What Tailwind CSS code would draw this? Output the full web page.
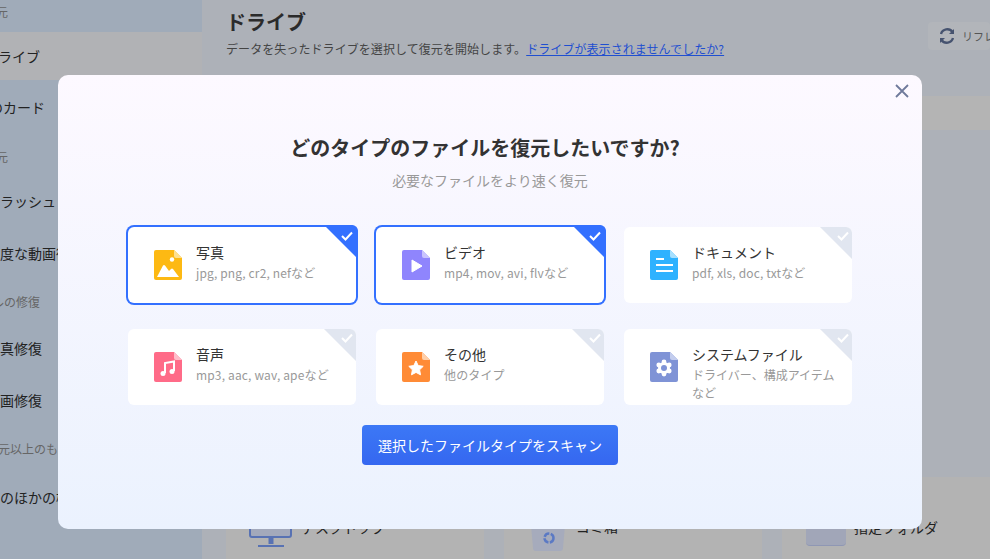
<!DOCTYPE html>
<html lang="ja">
<head>
    <meta charset="UTF-8">
    <title>ファイルタイプ選択</title>
    <script src="https://cdn.jsdelivr.net/npm/@tailwindcss/browser@4"></script>
</head>
<body class="relative w-[990px] h-[559px] overflow-hidden bg-[#adb1b8] [font-family:'Noto_Sans_CJK_JP','Noto_Sans',sans-serif]">
    <!-- app behind the dialog -->
    <div class="flex h-full">
        <aside class="w-[202px] shrink-0 overflow-hidden bg-[#a0abb9] text-sm text-[#222] whitespace-nowrap">
            <div class="h-8 pb-2 flex items-center -ml-[64px] text-xs text-[#666]">ファイル復元</div>
            <div class="h-12 flex items-center bg-[#b1b2b5]"><span class="-ml-[16px]">ドライブ</span></div>
            <div class="h-[54px] flex items-center -ml-[53px]">メモリのカード</div>
            <div class="h-[42px] pt-1 flex items-center -ml-[52px] text-xs text-[#666]">ビデオ復元</div>
            <div class="h-[50px] flex items-center -ml-[14px]">クラッシュしたビデオ</div>
            <div class="h-[54px] flex items-center -ml-[14px]">高度な動画復元</div>
            <div class="h-[44px] flex items-center -ml-[44px] text-xs text-[#666]">ファイルの修復</div>
            <div class="h-12 flex items-center -ml-[14px]">写真修復</div>
            <div class="h-14 flex items-center -ml-[14px]">動画修復</div>
            <div class="h-[42px] flex items-center -ml-[50px] text-xs text-[#666]">ファイル元以上のもの</div>
            <div class="h-[54px] flex items-center -ml-[14px]">そのほかの機能</div>
        </aside>
        <main class="flex-1 min-w-0 flex flex-col">
            <div class="h-24 flex justify-between pl-6 pt-2">
                <div>
                    <h1 class="text-xl font-bold text-[#2b2b2b]">ドライブ</h1>
                    <p class="mt-[5px] text-xs tracking-[0.07px] text-[#444]">データを失ったドライブを選択して復元を開始します。<a href="#" class="text-[#1f4fd0] underline">ドライブが表示されませんでしたか?</a></p>
                </div>
                <div class="mt-3.5 w-[62px] h-7 shrink-0 rounded bg-[#b2b5ba] flex items-center gap-1.5 pl-2.5 text-[11px] text-[#555] whitespace-nowrap overflow-hidden">
                    <svg class="shrink-0" width="18" height="18" viewBox="0 0 18 18" fill="none" stroke="#46536f" stroke-width="2.4"><path d="M3 7a6.5 6.5 0 0 1 11.5-2"/><path d="M15 11a6.5 6.5 0 0 1-11.5 2"/><path d="M16 2v5h-5z" fill="#46536f" stroke="none"/><path d="M2 16v-5h5z" fill="#46536f" stroke="none"/></svg>
                    リフレッシュ
                </div>
            </div>
            <div class="h-[34px] ml-6 bg-[#b4b4b4]"></div>
            <div class="flex-1"></div>
            <div class="h-[82px] ml-6 grid grid-cols-[258px_258px_1fr] gap-5 text-sm text-[#222]">
                <div class="bg-[#b3b3b3] flex items-end gap-2 pl-[23px] pb-3">
                    <svg width="44" height="30" viewBox="0 0 44 30" fill="#a3a9bb" stroke="#5872b3" stroke-width="2"><rect x="1" y="-12" width="41" height="32" rx="2"/><path d="M22 20v7" stroke-width="5"/><path d="M9 29h26" stroke-width="2"/></svg>
                    <span class="mb-[10px]">デスクトップ</span>
                </div>
                <div class="bg-[#b3b3b3] flex items-end gap-[11px] pl-[27px] pb-2">
                    <svg width="34" height="26" viewBox="0 0 34 26"><path d="M0 0h34l-2 23a3 3 0 0 1-3 3H5a3 3 0 0 1-3-3z" fill="#a6abbc"/><circle cx="18" cy="13" r="4.500" fill="none" stroke="#5b79c4" stroke-width="2.500" stroke-dasharray="6 1.500"/></svg>
                    <span class="mb-[15px]">ゴミ箱</span>
                </div>
                <div class="bg-[#b3b3b3] flex items-end gap-2 pl-6 pb-[13px]">
                    <div class="w-10 h-5 rounded-b-sm bg-[#a1a6b8] border-b border-[#8f97b4]"></div>
                    <span class="mb-[9px]">指定フォルダ</span>
                </div>
            </div>
        </main>
    </div>

    <!-- dialog -->
    <div class="absolute left-[58px] top-[75px] w-[864px] h-[454px] rounded-[10px] bg-linear-to-b from-[#fdf9ff] to-[#ebf2fe] flex flex-col items-center">
        <button class="absolute right-[12px] top-[8px] w-4 h-4 text-[#6f7a9b]">
            <svg width="16" height="16" viewBox="0 0 16 16" fill="none" stroke="currentColor" stroke-width="1.8"><path d="M2 2l12 12M14 2L2 14"/></svg>
        </button>
        <h2 class="mt-[58px] pr-[10px] text-xl leading-[30px] font-bold text-[#333]">どのタイプのファイルを復元したいですか?</h2>
        <p class="mt-[7px] text-sm leading-5 text-[#999]">必要なファイルをより速く復元</p>
        <div class="mt-[37px] w-[724px] grid grid-cols-3 gap-x-5 gap-y-[26px]">
            <!-- 写真 -->
            <div class="relative h-[76px] bg-white rounded-md ring-2 ring-[#3370ff] flex pl-[26px] pt-[23px] gap-[14px]">
                <svg class="shrink-0" width="28" height="30" viewBox="0 0 28 30"><path d="M2 0h18l8 8v20a2 2 0 0 1-2 2H2a2 2 0 0 1-2-2V2a2 2 0 0 1 2-2z" fill="#fdb913"/><path d="M20 0l8 8h-6a2 2 0 0 1-2-2z" fill="#fee08f"/><circle cx="18" cy="9.500" r="2.200" fill="#fff"/><path d="M3 27l6-11.500q1-1 2 0L15 21l2-2q1-1 2 0l6 8z" fill="#fff"/></svg>
                <div class="w-[150px] -mt-[8px]">
                    <div class="text-sm leading-5 text-[#333]">写真</div>
                    <div class="mt-[2px] text-xs leading-[18px] tracking-[0.15px] text-[#999]">jpg, png, cr2, nefなど</div>
                </div>
                <div class="absolute -right-[2px] -top-[2px] w-[34px] h-[34px] rounded-tr-md bg-[#3370ff] [clip-path:polygon(0_0,100%_0,100%_100%)]"></div>
                <svg class="absolute right-[3px] top-[4px]" width="12" height="10" viewBox="0 0 12 10" fill="none" stroke="#fff" stroke-width="2"><path d="M1 5l3.500 3.500L11 1.500"/></svg>
            </div>
            <!-- ビデオ -->
            <div class="relative h-[76px] bg-white rounded-md ring-2 ring-[#3370ff] flex pl-[26px] pt-[23px] gap-[14px]">
                <svg class="shrink-0" width="28" height="30" viewBox="0 0 28 30"><path d="M2 0h18l8 8v20a2 2 0 0 1-2 2H2a2 2 0 0 1-2-2V2a2 2 0 0 1 2-2z" fill="#8f85fd"/><path d="M20 0l8 8h-6a2 2 0 0 1-2-2z" fill="#c9c4fe"/><path d="M10 10l10 6-10 6z" fill="#fff" stroke="#fff" stroke-linejoin="round"/></svg>
                <div class="w-[150px] -mt-[8px]">
                    <div class="text-sm leading-5 text-[#333]">ビデオ</div>
                    <div class="mt-[2px] text-xs leading-[18px] tracking-[0.15px] text-[#999]">mp4, mov, avi, flvなど</div>
                </div>
                <div class="absolute -right-[2px] -top-[2px] w-[34px] h-[34px] rounded-tr-md bg-[#3370ff] [clip-path:polygon(0_0,100%_0,100%_100%)]"></div>
                <svg class="absolute right-[3px] top-[4px]" width="12" height="10" viewBox="0 0 12 10" fill="none" stroke="#fff" stroke-width="2"><path d="M1 5l3.500 3.500L11 1.500"/></svg>
            </div>
            <!-- ドキュメント -->
            <div class="relative h-[76px] bg-white rounded-md flex pl-[26px] pt-[23px] gap-[14px]">
                <svg class="shrink-0" width="28" height="30" viewBox="0 0 28 30"><path d="M2 0h18l8 8v20a2 2 0 0 1-2 2H2a2 2 0 0 1-2-2V2a2 2 0 0 1 2-2z" fill="#2eb2ff"/><path d="M20 0l8 8h-6a2 2 0 0 1-2-2z" fill="#a6e0ff"/><path d="M6 9h8M6 15h17M6 21h17" stroke="#fff" stroke-width="2"/></svg>
                <div class="w-[150px] -mt-[8px]">
                    <div class="text-sm leading-5 text-[#333]">ドキュメント</div>
                    <div class="mt-[2px] text-xs leading-[18px] tracking-[0.15px] text-[#999]">pdf, xls, doc, txtなど</div>
                </div>
                <div class="absolute right-0 top-0 w-8 h-8 rounded-tr-md bg-[#e1e6f0] [clip-path:polygon(0_0,100%_0,100%_100%)]"></div>
                <svg class="absolute right-[3px] top-[4px]" width="12" height="10" viewBox="0 0 12 10" fill="none" stroke="#fff" stroke-width="2"><path d="M1 5l3.500 3.500L11 1.500"/></svg>
            </div>
            <!-- 音声 -->
            <div class="relative h-[76px] bg-white rounded-md flex pl-[26px] pt-[23px] gap-[14px]">
                <svg class="shrink-0" width="28" height="30" viewBox="0 0 28 30"><path d="M2 0h18l8 8v20a2 2 0 0 1-2 2H2a2 2 0 0 1-2-2V2a2 2 0 0 1 2-2z" fill="#ff6b88"/><path d="M20 0l8 8h-6a2 2 0 0 1-2-2z" fill="#ffbcc9"/><path d="M11 21V11l9-1.500V19" fill="none" stroke="#fff" stroke-width="2"/><circle cx="9" cy="21.500" r="2.500" fill="#fff"/><circle cx="18" cy="19.500" r="2.500" fill="#fff"/></svg>
                <div class="w-[150px] -mt-[8px]">
                    <div class="text-sm leading-5 text-[#333]">音声</div>
                    <div class="mt-[2px] text-xs leading-[18px] tracking-[0.15px] text-[#999]">mp3, aac, wav, apeなど</div>
                </div>
                <div class="absolute right-0 top-0 w-8 h-8 rounded-tr-md bg-[#e1e6f0] [clip-path:polygon(0_0,100%_0,100%_100%)]"></div>
                <svg class="absolute right-[3px] top-[4px]" width="12" height="10" viewBox="0 0 12 10" fill="none" stroke="#fff" stroke-width="2"><path d="M1 5l3.500 3.500L11 1.500"/></svg>
            </div>
            <!-- その他 -->
            <div class="relative h-[76px] bg-white rounded-md flex pl-[26px] pt-[23px] gap-[14px]">
                <svg class="shrink-0" width="28" height="30" viewBox="0 0 28 30"><path d="M2 0h18l8 8v20a2 2 0 0 1-2 2H2a2 2 0 0 1-2-2V2a2 2 0 0 1 2-2z" fill="#ff8b36"/><path d="M20 0l8 8h-6a2 2 0 0 1-2-2z" fill="#ffcfa9"/><path d="M14 9l2.200 4.600 5 .7-3.600 3.500.9 5L14 20.400l-4.500 2.400.9-5-3.600-3.500 5-.7z" fill="#fff" stroke="#fff" stroke-linejoin="round"/></svg>
                <div class="w-[150px] -mt-[8px]">
                    <div class="text-sm leading-5 text-[#333]">その他</div>
                    <div class="mt-[2px] text-xs leading-[18px] tracking-[0.15px] text-[#999]">他のタイプ</div>
                </div>
                <div class="absolute right-0 top-0 w-8 h-8 rounded-tr-md bg-[#e1e6f0] [clip-path:polygon(0_0,100%_0,100%_100%)]"></div>
                <svg class="absolute right-[3px] top-[4px]" width="12" height="10" viewBox="0 0 12 10" fill="none" stroke="#fff" stroke-width="2"><path d="M1 5l3.500 3.500L11 1.500"/></svg>
            </div>
            <!-- システムファイル -->
            <div class="relative h-[76px] bg-white rounded-md flex pl-[26px] pt-[23px] gap-[14px]">
                <svg class="shrink-0" width="28" height="30" viewBox="0 0 28 30"><path d="M2 0h18l8 8v20a2 2 0 0 1-2 2H2a2 2 0 0 1-2-2V2a2 2 0 0 1 2-2z" fill="#7f93d6"/><path d="M20 0l8 8h-6a2 2 0 0 1-2-2z" fill="#c3cdee"/><g fill="#fff"><circle cx="14" cy="16" r="6"/><circle cx="14" cy="10" r="2.400"/><circle cx="14" cy="22" r="2.400"/><circle cx="8.800" cy="13" r="2.400"/><circle cx="19.200" cy="13" r="2.400"/><circle cx="8.800" cy="19" r="2.400"/><circle cx="19.200" cy="19" r="2.400"/></g><circle cx="14" cy="16" r="3" fill="#7f93d6"/></svg>
                <div class="w-[150px] -mt-[8px]">
                    <div class="text-sm leading-5 text-[#333]">システムファイル</div>
                    <div class="mt-[2px] text-xs leading-[18px] text-[#999]">ドライバー、構成アイテムなど</div>
                </div>
                <div class="absolute right-0 top-0 w-8 h-8 rounded-tr-md bg-[#e1e6f0] [clip-path:polygon(0_0,100%_0,100%_100%)]"></div>
                <svg class="absolute right-[3px] top-[4px]" width="12" height="10" viewBox="0 0 12 10" fill="none" stroke="#fff" stroke-width="2"><path d="M1 5l3.500 3.500L11 1.500"/></svg>
            </div>
        </div>
        <button class="mt-5 w-64 h-10 rounded bg-linear-to-b from-[#3c78f6] to-[#3567f0] text-sm text-white">選択したファイルタイプをスキャン</button>
    </div>
</body>
</html>
